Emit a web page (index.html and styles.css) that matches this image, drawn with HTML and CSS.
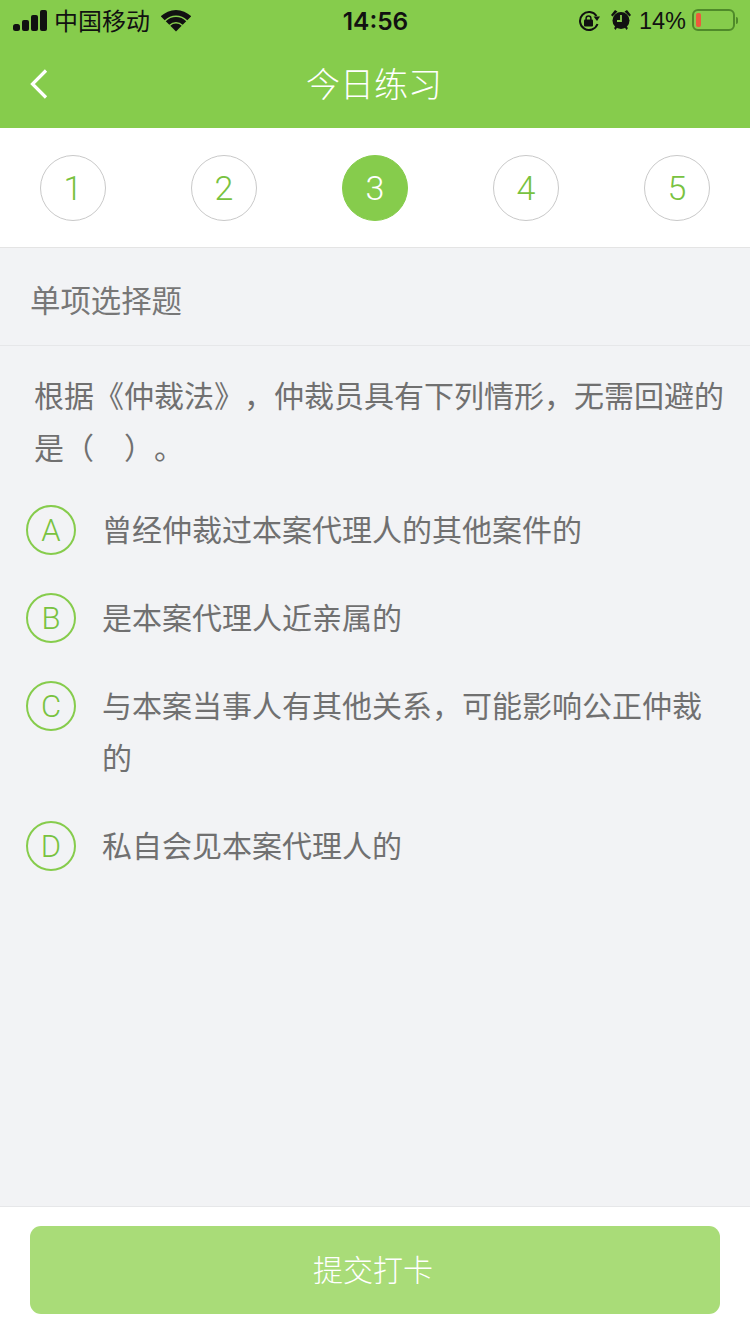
FILE: index.html
```html
<!DOCTYPE html>
<html lang="zh-CN">
<head>
<meta charset="utf-8">
<title>今日练习</title>
<link rel="stylesheet" href="styles.css">
</head>
<body>
<div class="page">
  <header class="top">
    <div class="status">
      <div class="status-side">
        <svg class="signal" width="34" height="21" viewBox="0 0 34 21"><rect x="0" y="14" width="7" height="7" rx="2.500"/><rect x="9" y="10" width="7" height="11" rx="2"/><rect x="18" y="5" width="7" height="16" rx="2"/><rect x="27" y="0" width="7" height="21" rx="2"/></svg>
        <span class="carrier">中国移动</span>
        <svg class="wifi" width="30" height="22" viewBox="0 0 30 22"><path d="M15 21.500L9.340 15.840a8 8 0 0 1 11.320 0z"/><path d="M4.750 11.250A14.500 14.500 0 0 1 25.250 11.250L21.700 14.800A9.500 9.500 0 0 0 8.300 14.800z"/><path d="M-0.200 6.300A21.500 21.500 0 0 1 30.200 6.300L26.300 10.200A16 16 0 0 0 3.700 10.200z"/></svg>
      </div>
      <span class="time">14:56</span>
      <div class="status-side status-right">
        <svg class="lock" width="22" height="22" viewBox="0 0 22 22"><path d="M19.500 14A9 9 0 1 1 18.500 6" fill="none" stroke="#111" stroke-width="2"/><path d="M15.500 6.500h6.500l-3 4.500z"/><rect x="6" y="9.500" width="9" height="7" rx="1"/><path d="M8.100 10V8.300a2.400 2.400 0 0 1 4.800 0V10" fill="none" stroke="#111" stroke-width="1.500"/></svg>
        <svg class="alarm" width="20" height="21" viewBox="0 0 20 21"><circle cx="10" cy="11.500" r="8.500"/><path d="M0 6l4-5 2.500 1.500-5 5zM20 6l-4-5-2.500 1.500 5 5zM3 19l2-2 1.500 1-2 3zM17 19l-2-2-1.500 1 2 3z"/><path d="M10 6V12H6" fill="none" stroke="#86cc4c" stroke-width="1.800"/></svg>
        <span class="percent">14%</span>
        <span class="battery"><span class="battery-level"></span></span>
        <span class="battery-nub"></span>
      </div>
    </div>
    <div class="nav">
      <svg class="back" width="20" height="32" viewBox="0 0 20 32"><path d="M17 2.500L3.500 16 17 29.500" fill="none" stroke="#fff" stroke-width="3.200"/></svg>
      <h1 class="title">今日练习</h1>
    </div>
  </header>

  <nav class="steps">
    <span class="step">1</span>
    <span class="step">2</span>
    <span class="step step-active">3</span>
    <span class="step">4</span>
    <span class="step">5</span>
  </nav>

  <main class="content">
    <div class="kind">单项选择题</div>
    <p class="question">根据《仲裁法》，仲裁员具有下列情形，无需回避的是（　）。</p>
    <ul class="options">
      <li class="option"><span class="badge">A</span><span class="option-text">曾经仲裁过本案代理人的其他案件的</span></li>
      <li class="option"><span class="badge">B</span><span class="option-text">是本案代理人近亲属的</span></li>
      <li class="option"><span class="badge">C</span><span class="option-text">与本案当事人有其他关系，可能影响公正仲裁的</span></li>
      <li class="option"><span class="badge">D</span><span class="option-text">私自会见本案代理人的</span></li>
    </ul>
  </main>

  <footer class="footer">
    <button class="submit" type="button">提交打卡</button>
  </footer>
</div>
</body>
</html>
```

FILE: styles.css
```css
* { box-sizing: border-box; }
html, body { margin: 0; padding: 0; }
body { font-family: "Noto Sans CJK SC", "Liberation Sans", sans-serif; background: #f2f3f5; text-spacing-trim: space-all; }
.page { width: 750px; height: 1334px; display: flex; flex-direction: column; overflow: hidden; }

.top { background: #86cc4c; height: 128px; flex: none; }
.status { height: 40px; display: flex; align-items: center; justify-content: space-between; padding: 0 12px 0 13px; color: #111; }
.status-side { width: 300px; display: flex; align-items: center; }
.status-right { justify-content: flex-end; }
.signal { fill: #111; }
.carrier { font-size: 24px; line-height: 40px; margin-left: 7px; font-weight: 400; }
.wifi { fill: #111; margin-left: 11px; margin-top: 1px; flex: none; }
.time { font-family: Inter, "Liberation Sans", sans-serif; font-size: 24.500px; font-weight: 600; line-height: 40px; margin-top: 1px; }
.lock { fill: #111; margin-right: 11px; margin-top: 2px; }
.alarm { fill: #111; margin-right: 8px; margin-top: -1px; }
.percent { font-family: "Liberation Sans", sans-serif; font-size: 23.500px; line-height: 40px; margin-right: 6px; margin-top: 2px; }
.battery { width: 43px; height: 22px; border: 2px solid #4f8a2a; border-radius: 6px; padding: 2px; display: flex; }
.battery-level { width: 5px; background: #ec5a3c; border-radius: 2px; }
.battery-nub { width: 2px; height: 7px; background: #4f8a2a; margin-left: 1px; border-radius: 0 2px 2px 0; }

.nav { height: 88px; display: flex; align-items: center; justify-content: center; position: relative; padding-right: 2px; }
.back { position: absolute; left: 29px; top: 28px; }
.title { margin: -2px 0 0; font-size: 34px; font-weight: 300; color: #fff; line-height: 88px; }

.steps { height: 120px; flex: none; background: #fff; border-bottom: 1px solid #e4e4e4; display: flex; justify-content: space-between; align-items: flex-start; padding: 27px 40px 0; }
.step { width: 66px; height: 66px; border-radius: 50%; border: 1px solid #c9c9c9; color: #78c240; font-family: Roboto, "Liberation Sans", sans-serif; font-weight: 300; font-size: 34px; display: flex; align-items: center; justify-content: center; }
.step-active { background: #86cc4c; border-color: #86cc4c; color: #fff; }

.content { flex: 1; min-height: 0; }
.kind { height: 98px; border-bottom: 1px solid #e6e7e9; padding-left: 30px; font-size: 30.400px; font-weight: 400; line-height: 102px; color: #777; }
.question { margin: 22px 0 32px; padding: 0 20px 0 34px; font-size: 30px; font-weight: 400; line-height: 52px; color: #707070; }
.options { list-style: none; margin: 0; padding: 0 46px 0 26px; display: flex; flex-direction: column; gap: 36px; }
.option { display: flex; align-items: flex-start; }
.badge { flex: none; width: 50px; height: 50px; margin-top: 1px; border: 2px solid #86cc4c; border-radius: 50%; color: #78c240; font-family: Roboto, "Liberation Sans", sans-serif; font-weight: 300; font-size: 31px; display: flex; align-items: center; justify-content: center; }
.option-text { margin-top: -2px; padding: 0 0 2px 26px; font-size: 30px; font-weight: 400; line-height: 52px; color: #707070; }

.footer { height: 128px; flex: none; background: #fff; border-top: 1px solid #e6e7e9; padding: 19px 30px 0; }
.submit { display: block; width: 100%; height: 88px; border: 0; border-radius: 11px; background: #a9dc78; color: #fff; font-family: "Noto Sans CJK SC", sans-serif; font-size: 30px; font-weight: 300; padding: 0 4px 4px 0; }
```
